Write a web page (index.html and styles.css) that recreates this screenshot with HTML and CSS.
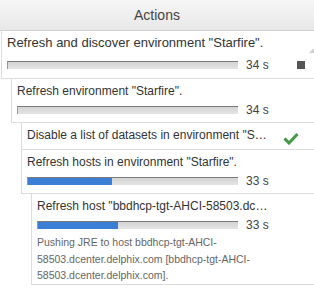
FILE: index.html
```html
<!DOCTYPE html>
<html lang="en">
<head>
    <meta charset="UTF-8">
    <title>Actions</title>
    <link rel="stylesheet" href="styles.css">
</head>
<body>
    <div class="panel">
        <div class="panel-header">Actions</div>

        <div class="tree">
            <div class="node node-root">
                <div class="node-main">
                    <div class="node-title">Refresh and discover environment "Starfire".</div>
                    <div class="progress">
                        <div class="bar"><div class="bar-fill" style="width: 0%"></div></div>
                        <span class="time">34 s</span>
                    </div>
                </div>
                <div class="node-status"><span class="icon-stop"></span></div>
            </div>

            <div class="children">
                <div class="node">
                    <div class="node-main">
                        <div class="node-title">Refresh environment "Starfire".</div>
                        <div class="progress">
                            <div class="bar"><div class="bar-fill" style="width: 0%"></div></div>
                            <span class="time">34 s</span>
                        </div>
                    </div>
                    <div class="node-status"></div>
                </div>

                <div class="children">
                    <div class="node node-done">
                        <div class="node-main">
                            <div class="node-title">Disable a list of datasets in environment "Starfire".</div>
                        </div>
                        <div class="node-status">
                            <svg class="icon-check" width="16" height="13" viewBox="0 0 16 13">
                                <path d="M1.5 6.5 L6 11 L14.5 2" fill="none" stroke="#3f9a43" stroke-width="3" stroke-linejoin="miter"/>
                            </svg>
                        </div>
                    </div>

                    <div class="node">
                        <div class="node-main">
                            <div class="node-title">Refresh hosts in environment "Starfire".</div>
                            <div class="progress">
                                <div class="bar"><div class="bar-fill" style="width: 40%"></div></div>
                                <span class="time">33 s</span>
                            </div>
                        </div>
                        <div class="node-status"></div>
                    </div>

                    <div class="children">
                        <div class="node node-message">
                            <div class="node-main">
                                <div class="node-title">Refresh host "bbdhcp-tgt-AHCI-58503.dcenter.delphix.com".</div>
                                <div class="progress">
                                    <div class="bar"><div class="bar-fill" style="width: 40%"></div></div>
                                    <span class="time">33 s</span>
                                </div>
                                <div class="message">Pushing JRE to host bbdhcp-tgt-AHCI-58503.dcenter.delphix.com [bbdhcp-tgt-AHCI-58503.dcenter.delphix.com].</div>
                            </div>
                            <div class="node-status"></div>
                        </div>
                    </div>
                </div>
            </div>
        </div>
    </div>
</body>
</html>
```

FILE: styles.css
```css
body {
    margin: 0;
    font-family: "Liberation Sans", Arial, sans-serif;
    color: #333;
    background-color: #ffffff;
}
.panel {
    width: 314px;
    overflow: hidden;
}
.panel-header {
    height: 30px;
    line-height: 30px;
    text-align: center;
    font-size: 14px;
    color: #444;
    background: linear-gradient(#f6f6f6, #e8e8e8);
    border-bottom: 1px solid #d0d0d0;
}
.tree {
    margin-left: 1px;
}
.children {
    margin-left: 10px;
}
.node {
    position: relative;
    display: flex;
    border-left: 1px solid #dcdcdc;
    border-bottom: 1px solid #dcdcdc;
    padding: 2px 0 3px 5px;
}
.node-main {
    flex: 1;
    min-width: 0;
}
.node-status {
    width: 44px;
    flex: none;
    display: flex;
    align-items: flex-end;
}
.node-title {
    font-size: 12px;
    line-height: 20px;
    white-space: nowrap;
    overflow: hidden;
    text-overflow: ellipsis;
}
.progress {
    display: flex;
    align-items: center;
    height: 18px;
}
.bar {
    flex: 1;
    height: 7px;
    background: linear-gradient(#d4d4d4, #e4e4e4);
    border-top: 1px solid #7a7a7a;
    border-left: 1px solid #9a9a9a;
}
.bar-fill {
    height: 100%;
    background-color: #3a7ed6;
}
.time {
    flex: none;
    width: 24px;
    margin-left: 8px;
    font-size: 12px;
    white-space: nowrap;
    color: #444;
}

/* root row */
.node-root {
    padding-bottom: 4px;
}
.node-root .node-title {
    font-size: 13px;
}
.node-root .progress {
    margin-top: 3px;
}
.node-root::after {
    content: "";
    position: absolute;
    right: 0;
    top: 17px;
    border-left: 5px solid transparent;
    border-bottom: 5px solid #cfcfcf;
}
.icon-stop {
    width: 8px;
    height: 8px;
    margin: 0 0 5px 27px;
    background-color: #555;
}

/* finished row */
.node-done {
    padding-bottom: 4px;
}
.icon-check {
    margin: 0 0 0 13px;
}

/* row with a status message */
.node-message {
    padding-bottom: 0;
}
.message {
    font-size: 10.5px;
    line-height: 16.5px;
    color: #666;
}
```
